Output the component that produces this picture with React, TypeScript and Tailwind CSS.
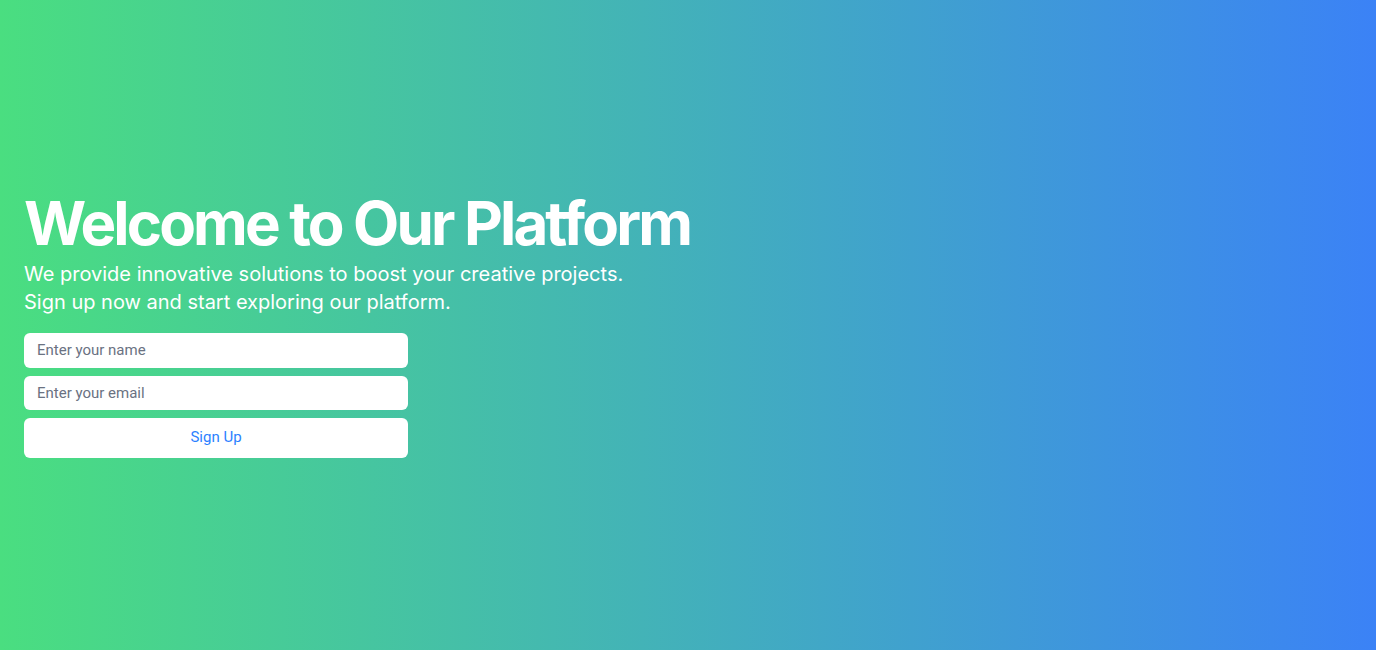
const App = () => {
  return (
    <div className="min-h-screen w-full flex flex-col justify-center px-6 bg-[linear-gradient(to_right,#4ade80,#3b82f6)] font-['Inter',sans-serif]">
      <h1 className="text-6xl leading-none font-bold tracking-[-0.0475em] text-white mb-[7px]">
        Welcome to Our Platform
      </h1>
      <p className="text-xl text-white">
        We provide innovative solutions to boost your creative projects.
        <br />
        Sign up now and start exploring our platform.
      </p>
      <form
        className="mt-[17px] w-96 flex flex-col gap-2 font-['Roboto',sans-serif]"
        onSubmit={(e) => e.preventDefault()}
      >
        <input
          type="text"
          placeholder="Enter your name"
          className="h-[35px] px-[13px] rounded-md bg-white text-[15px] text-gray-800 placeholder:text-gray-500 outline-none"
        />
        <input
          type="email"
          placeholder="Enter your email"
          className="h-[34px] px-[13px] rounded-md bg-white text-[15px] text-gray-800 placeholder:text-gray-500 outline-none"
        />
        <button
          type="submit"
          className="h-10 rounded-md bg-white text-[15px] text-blue-500"
        >
          Sign Up
        </button>
      </form>
    </div>
  );
};

export default App;
